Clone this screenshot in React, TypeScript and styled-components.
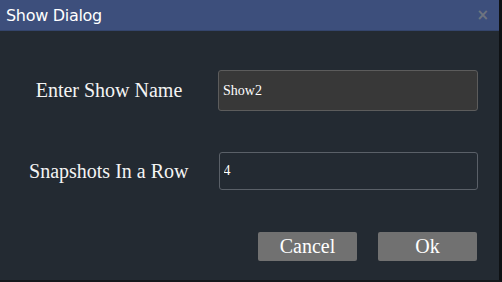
import React from "react";
import styled, { createGlobalStyle } from "styled-components";

const Global = createGlobalStyle`
  html, body { margin: 0; padding: 0; background: #232a32; }
  body { width: 502px; height: 282px; overflow: hidden; }
`;

const Dialog = styled.div`
  width: 502px;
  height: 282px;
  box-sizing: border-box;
  background: #232a32;
  border-right: 3px solid #0e1114;
  border-bottom: 2px solid #15191d;
  display: flex;
  flex-direction: column;
`;

const Header = styled.div`
  height: 30px;
  background: #3d4f7c;
  border-bottom: 1px solid #34456c;
  display: flex;
  align-items: center;
  justify-content: space-between;
  padding: 0 10px 0 6px;
`;

const Title = styled.span`
  font-family: "DejaVu Sans", Verdana, sans-serif;
  font-size: 16px;
  letter-spacing: -0.3px;
  color: #ffffff;
`;

const Close = styled.span`
  font-family: "DejaVu Sans", sans-serif;
  font-size: 15px;
  font-weight: bold;
  color: #6e7480;
`;

const Body = styled.div`
  flex: 1;
  display: flex;
  flex-direction: column;
  padding: 39px 21px 0 0;
`;

const Row = styled.div<{ $mt?: number }>`
  display: flex;
  align-items: center;
  margin-top: ${(p) => p.$mt ?? 0}px;
`;

const Label = styled.label`
  width: 218px;
  text-align: center;
  font-family: "Liberation Serif", serif;
  font-size: 20px;
  color: #f4f4f4;
`;

const Input = styled.input<{ $filled?: boolean }>`
  box-sizing: border-box;
  width: 260px;
  height: ${(p) => (p.$filled ? 41 : 38)}px;
  margin-left: ${(p) => (p.$filled ? 0 : 1)}px;
  background: ${(p) => (p.$filled ? "#383838" : "#232a32")};
  border: 1px solid ${(p) => (p.$filled ? "#5c5c5c" : "#5a6068")};
  border-radius: 3px;
  padding: 0 4px;
  font-family: "Liberation Serif", serif;
  font-size: 14px;
  color: #ffffff;
  outline: none;
`;

const Actions = styled.div`
  display: flex;
  justify-content: flex-end;
  gap: 21px;
  margin-top: 42px;
  padding-right: 1px;
`;

const Button = styled.button`
  width: 99px;
  height: 29px;
  background: #717171;
  border: none;
  border-radius: 2px;
  font-family: "Liberation Serif", serif;
  font-size: 20px;
  color: #ffffff;
  padding: 0;
`;

export default function App() {
  return (
    <>
      <Global />
      <Dialog>
        <Header>
          <Title>Show Dialog</Title>
          <Close>×</Close>
        </Header>
        <Body>
          <Row>
            <Label>Enter Show Name</Label>
            <Input $filled defaultValue="Show2" />
          </Row>
          <Row $mt={41}>
            <Label>Snapshots In a Row</Label>
            <Input defaultValue="4" />
          </Row>
          <Actions>
            <Button>Cancel</Button>
            <Button>Ok</Button>
          </Actions>
        </Body>
      </Dialog>
    </>
  );
}
